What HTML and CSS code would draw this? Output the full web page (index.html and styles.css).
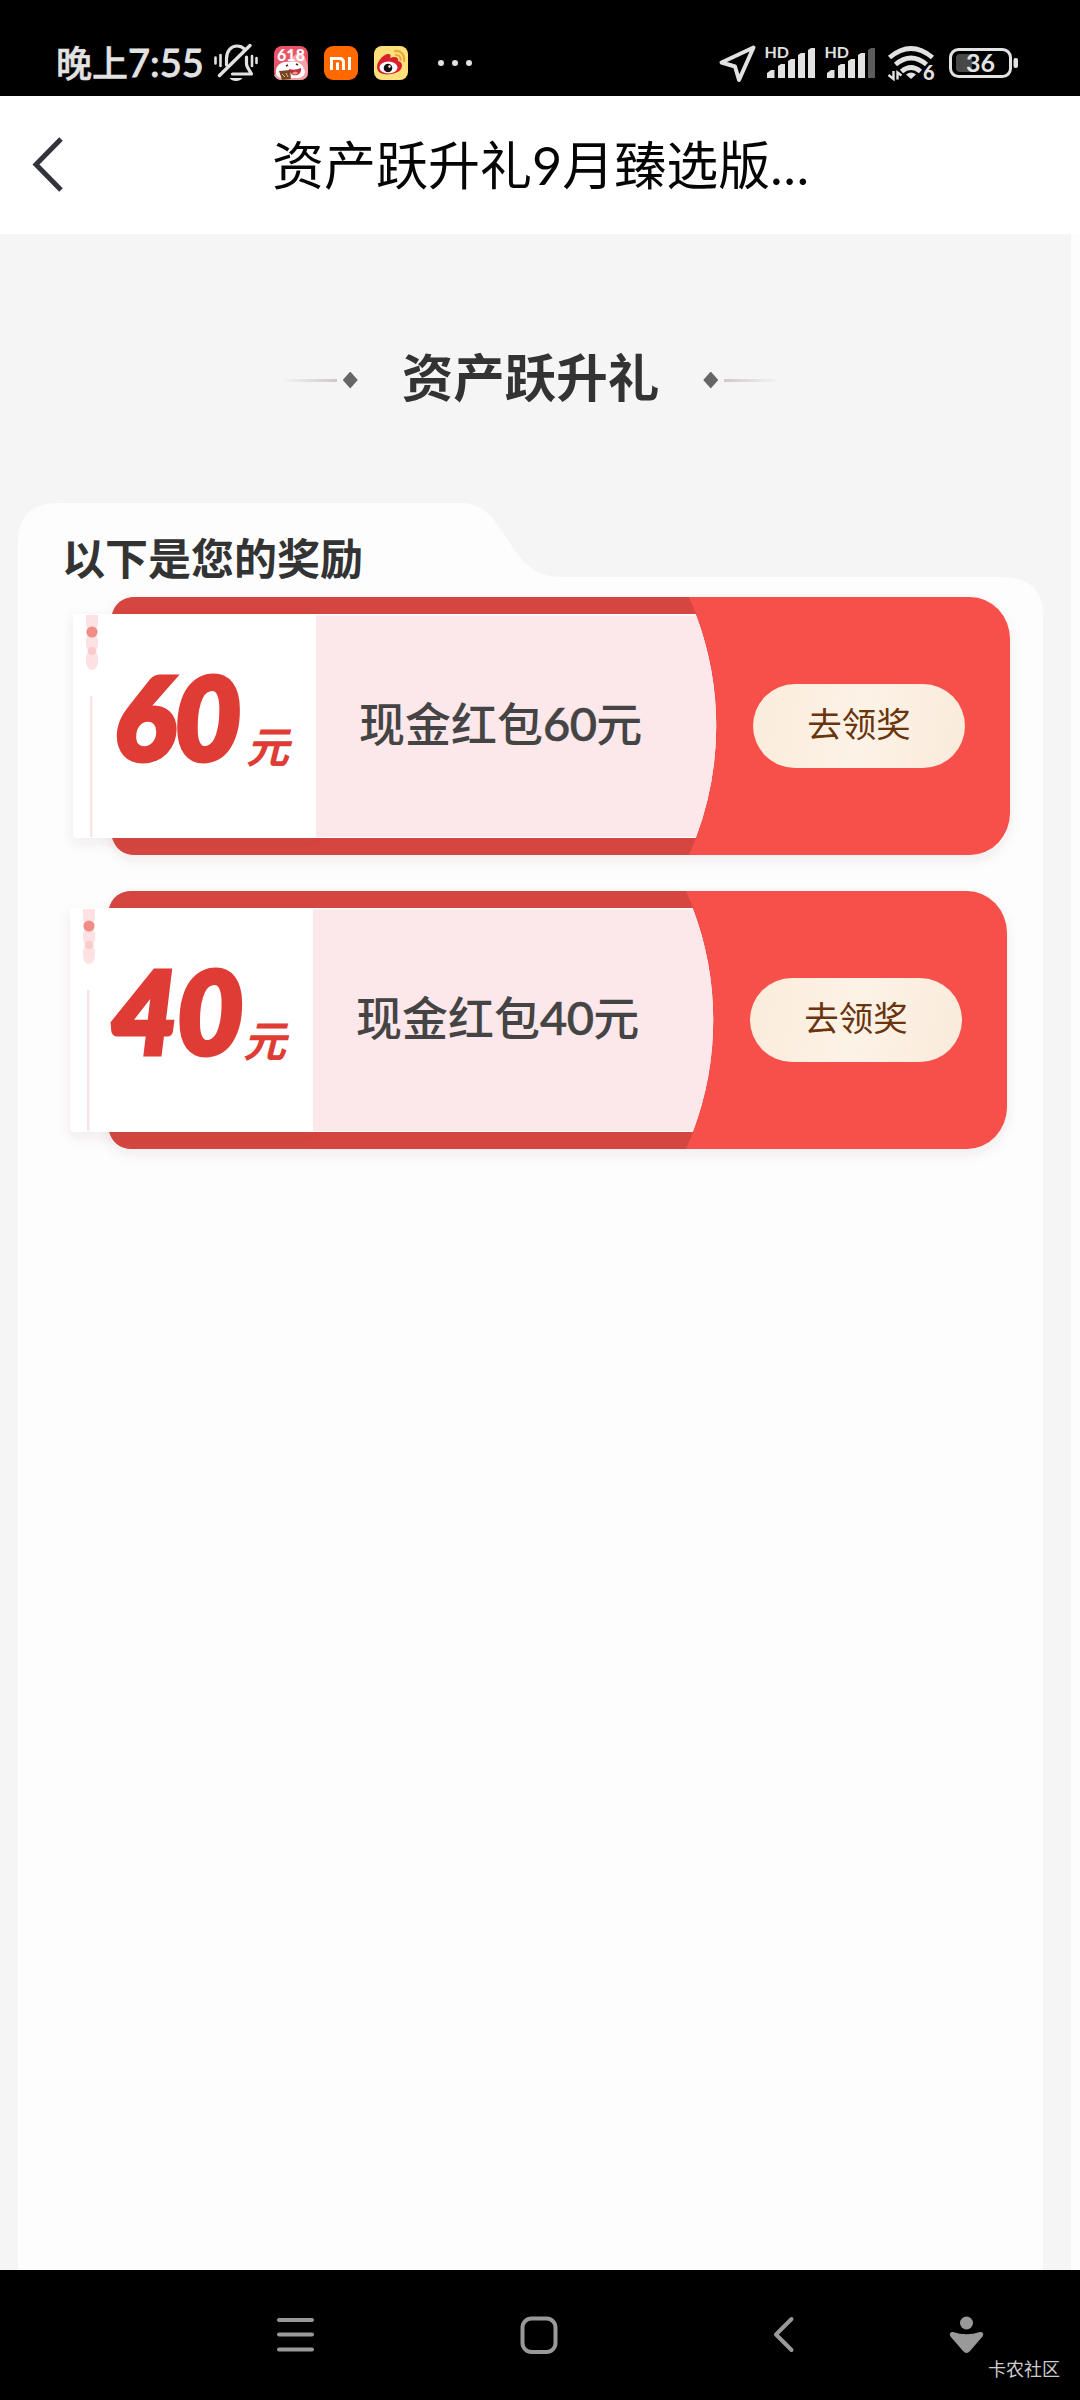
FILE: index.html
```html
<!DOCTYPE html>
<html lang="zh-CN">
<head>
<meta charset="utf-8">
<title>资产跃升礼</title>
<link rel="stylesheet" href="styles.css">
</head>
<body>
<div class="status">
  <span class="clock">晚上<span class="digits">7:55</span></span>
  <svg class="bell" width="46" height="40" viewBox="213 44 46 40" fill="none" stroke="#e2e2e2" stroke-width="3.2" stroke-linecap="round" stroke-linejoin="round">
    <path d="M215.500 58.500v6M220.500 56v11M252 57v10M256.500 59v5" stroke-width="2.600"/>
    <path d="M226.500 66v-6c0-8 4.500-13 10.500-13 3 0 5.500 1 7.500 3M246.500 58v7c0 3 3 6 5 10h-19"/>
    <path d="M250 46.500L219.500 76.500" stroke-width="3.400"/><path d="M229.500 79h13c-2.500 4-10.500 4-13 0z" fill="#e2e2e2" stroke="none"/>
  </svg>
  <div class="apps">
    <svg width="34" height="34" viewBox="0 0 34 34">
      <rect width="34" height="34" rx="8" fill="#e9546a"/>
      <path d="M24 6c6 2 10 9 10 18v2q0 8-8 8H8q-6 0-8-5l6-5z" fill="#f3a2a8"/>
      <text x="17" y="15" text-anchor="middle" class="t618">618</text>
      <path d="M2 24c1-6 7-9 13-8 7-2 14 2 15 7 3 4-1 9-7 9H9c-5 0-8-3-7-8z" fill="#fff"/>
      <path d="M15 23q6 2 12-1c1 9-11 10-12 1z" fill="#c32c39"/><path d="M18 27q4-3 6 0-3 3-6 0z" fill="#f59a9a"/>
      <path d="M12 20l2-1M22 18l2 1" stroke="#4b2020" stroke-width="1.600"/>
      <path d="M5 25l11-1 1 9-9 1z" fill="#774624"/><path d="M8 28l3 3M12 27l2 4" stroke="#e6bd7a"/>
    </svg>
    <svg width="34" height="34" viewBox="0 0 34 34">
      <rect width="34" height="34" rx="9" fill="#ff6900"/>
      <path d="M7.500 24V12.500h8q4 0 4 4V24M13.500 16.500V24M25.500 11v13" fill="none" stroke="#fff" stroke-width="3"/>
    </svg>
    <svg width="34" height="34" viewBox="0 0 34 34">
      <rect width="34" height="34" rx="8" fill="#ffe07a"/>
      <path d="M3 21c0-6 7-13 11-13 3 0 3 2 2 4 4-2 9-1 8 3 4 1 5 4 3 8-3 6-24 9-24-2z" fill="#d9202c"/>
      <ellipse cx="14.500" cy="21.500" rx="9" ry="6" fill="#fff"/><circle cx="14" cy="22" r="4.300" fill="#111"/><circle cx="15.500" cy="20.500" r="1.200" fill="#fff"/>
      <path d="M21 5c6-1 10 4 9 10M22 9c3 0 5 2 4.500 5" fill="none" stroke="#e7a93c" stroke-width="2.200" stroke-linecap="round"/>
    </svg>
  </div>
  <svg class="more" width="36" height="8" viewBox="0 0 36 8" fill="#e2e2e2"><circle cx="4" cy="4" r="3"/><circle cx="18" cy="4" r="3"/><circle cx="32" cy="4" r="3"/></svg>
  <div class="signals">
    <svg width="40" height="40" viewBox="716 44 40 40" fill="none" stroke="#e2e2e2" stroke-width="4" stroke-linejoin="round"><path d="M752.500 48.500L720.500 63.500 734 67.500 738 81z"/></svg>
    <svg width="55" height="48" viewBox="762 40 55 48" fill="#e2e2e2">
      <text x="764.500" y="59" class="hd">HD</text>
      <path d="M767 74l4-3h3.500v8H767zM778 67l3-2h4v14h-7zM788 62l3-2h4v19h-7zM798 56l3-2h4v25h-7zM808 51l3-2h4v30h-7z"/>
    </svg>
    <svg class="sim2" width="55" height="48" viewBox="762 40 55 48" fill="#e2e2e2">
      <text x="764.500" y="59" class="hd">HD</text>
      <path d="M767 74l4-3h3.500v8H767zM778 67l3-2h4v14h-7zM788 62l3-2h4v19h-7zM798 56l3-2h4v25h-7z"/>
      <path d="M808 51l3-2h4v30h-7z" fill="#5c5c5c"/>
    </svg>
    <svg class="wifi" width="48" height="40" viewBox="887 44 48 40" fill="none" stroke="#e2e2e2" stroke-width="4.800">
      <path d="M889.500 58.500q21.500-18 43 0M895.500 65.500q15.500-13 31 0M901.500 72.500q9.500-8 19 0"/>
      <path d="M906 75.500q5-4 10 0l-5 4.500z" fill="#e2e2e2" stroke="none"/>
      <path d="M893.500 72v8l-5-4M897.500 80.500v-7l4 3" stroke-width="2.400"/>
      <text x="923" y="80.500" class="w6">6</text>
    </svg>
    <svg class="batt" width="72" height="34" viewBox="948 46 72 34">
      <rect x="950.500" y="49.500" width="60" height="27" rx="8" fill="none" stroke="#e2e2e2" stroke-width="3"/>
      <path d="M960 54h12v18h-12q-4 0-4-4V58q0-4 4-4z" fill="#484848"/>
      <rect x="1013.500" y="58" width="4.500" height="10" rx="2" fill="#e2e2e2"/>
      <text x="980.500" y="72" text-anchor="middle" class="pct">36</text>
    </svg>
  </div>
</div>
<header class="header">
  <svg class="back" width="32" height="56" viewBox="0 0 32 56" fill="none" stroke="#33333c" stroke-width="5"><path d="M29 2L4 27.500 29 53"/></svg>
  <h1 class="page-title">资产跃升礼9月臻选版<span class="dots">...</span></h1>
</header>
<main class="page">
  <div class="banner">
    <span class="rule left"></span><span class="gem"></span>
    <h2 class="banner-title">资产跃升礼</h2>
    <span class="gem"></span><span class="rule"></span>
  </div>
  <section class="card">
    <svg class="card-shape" width="1025" height="1767" viewBox="18 503 1025 1767"><path d="M18 2270V543Q18 503 58 503H461C509 503 505 577 560 577H1003Q1043 577 1043 617V2270z" fill="#fdfdfd"/></svg>
    <h3 class="card-title">以下是您的奖励</h3>
    <div class="coupons">
      <article class="coupon">
        <svg class="coupon-shape" width="940" height="258" viewBox="72 597 940 258">
          <use href="#ticket"/>
        </svg>
        <div class="amount"><b class="num">60</b><span class="unit">元</span></div>
        <div class="name">现金红包<span class="digits">60</span>元</div>
        <button class="claim">去领奖</button>
      </article>
      <article class="coupon second">
        <svg class="coupon-shape" width="940" height="258" viewBox="72 597 940 258">
          <use href="#ticket"/>
        </svg>
        <div class="amount"><b class="num">40</b><span class="unit">元</span></div>
        <div class="name">现金红包<span class="digits">40</span>元</div>
        <button class="claim">去领奖</button>
      </article>
    </div>
  </section>
</main>
<nav class="nav">
  <svg class="menu" width="38" height="34" viewBox="276 2319 38 34" stroke="#999" stroke-width="4" stroke-linecap="round"><path d="M279 2321h33M279 2335.500h33M279 2350.500h33"/></svg>
  <svg class="home" width="38" height="38" viewBox="0 0 38 38" fill="none" stroke="#999" stroke-width="4"><rect x="2.500" y="2.500" width="33" height="33.500" rx="9"/></svg>
  <svg class="prev" width="22" height="38" viewBox="773 2317 22 38" fill="none" stroke="#999" stroke-width="4" stroke-linecap="round" stroke-linejoin="round"><path d="M791.500 2320L776 2335.500 791.500 2351"/></svg>
  <svg class="person" width="36" height="38" viewBox="949 2316 36 38" fill="#999"><circle cx="966.500" cy="2323" r="6.500"/><path d="M953 2332q13.500 4.500 27 0c3-.5 4 2 2.500 4.500L970 2351q-3.500 4-7 0l-12.500-14.500c-1.500-2.500-.5-5 2.500-4.500z"/></svg>
  <span class="mark">卡农社区</span>
</nav>
<svg class="defs" width="0" height="0">
  <defs>
    <filter id="soft" x="-10%" y="-10%" width="120%" height="125%"><feDropShadow dx="0" dy="5" stdDeviation="6" flood-color="#604040" flood-opacity=".09"/></filter>
    <g id="ticket">
      <path filter="url(#soft)" d="M136 597H970A40 42 0 0 1 1010 639V813A40 42 0 0 1 970 855H136Q112 855 110 826V626Q112 597 136 597z" fill="#f75049"/>
      <path d="M136 597H689A316 316 0 0 1 689 855H136Q117 855 112 837V614Q117 597 136 597z" fill="#d64640"/>
      <path filter="url(#soft)" d="M73 614H317V838H77Q73 838 73 834z" fill="#fff"/>
      <path d="M300 614H695.700A316 316 0 0 1 695.700 838H300z" fill="#fff"/>
      <path d="M316 615.500H696.200A316 316 0 0 1 696.200 837H316z" fill="#fce8ea"/>
      <path d="M86 615h12v9q-3 8 0 16v6q-3 5 0 10v6q-1 8-6 8t-6-8v-6q3-5 0-10v-6q3-8 0-16z" fill="#fde1e3"/>
      <circle cx="92" cy="632" r="5.600" fill="#f08d84"/><circle cx="92" cy="651" r="4" fill="#fbcaca"/>
      <path d="M90 696h2.500v141H90z" fill="#fae3e4"/>
    </g>
  </defs>
</svg>
</body>
</html>
```
FILE: styles.css
```css
* { box-sizing: border-box; }
body {
  margin: 0;
  width: 1080px;
  height: 2400px;
  display: flex;
  flex-direction: column;
  background: #fdfdfd;
  font-family: Lato, "Noto Sans CJK SC", sans-serif;
  overflow: hidden;
}
h1, h2, h3 { margin: 0; }
svg { display: block; flex: none; }
.defs { position: absolute; }

.status {
  height: 96px;
  background: #000;
  color: #e2e2e2;
  display: flex;
  align-items: center;
  padding: 30px 62px 0 56px;
}
.clock { width: 157px; margin-top: -2px; font-size: 36px; line-height: 40px; font-weight: 500; white-space: nowrap; -webkit-text-stroke: .5px #e2e2e2; }
.clock .digits { font-size: 38px; -webkit-text-stroke-width: .8px; }
.bell { margin-top: 0; }
.apps { display: flex; gap: 16px; margin-left: 15px; }
.more { margin-left: 29px; }
.signals { display: flex; align-items: center; margin-left: auto; }
.signals svg { margin-right: 5px; }
.signals .sim2 { margin-right: 10px; }
.signals .wifi { margin-right: 13px; }
.signals .batt { margin-right: -2px; }
.t618 { font: 900 16px Lato, sans-serif; fill: #fff; }
.hd { font: 700 16px Lato, sans-serif; }
.w6 { font: 900 20px Lato, sans-serif; fill: #e2e2e2; stroke: none; }
.pct { font: 700 25px Lato, sans-serif; fill: #e2e2e2; }

.header {
  height: 138px;
  background: #fff;
  display: flex;
  align-items: center;
  padding-left: 32px;
}
.page-title { margin: -1px 0 0 208px; font-size: 52px; font-weight: 400; line-height: 70px; color: #050505; white-space: nowrap; }
.dots { letter-spacing: 1px; }

.page {
  width: 1071px;
  height: 2036px;
  background: #f5f5f5;
  padding: 109px 28px 0 18px;
}
.banner { height: 74px; display: flex; align-items: center; justify-content: center; }
.banner-title { margin: -6px 44px 0; font-size: 51.500px; line-height: 74px; font-weight: 700; color: #333; }
.gem { width: 15px; height: 17px; background: #666; clip-path: polygon(50% 0, 100% 50%, 50% 100%, 0 50%); }
.rule { width: 55px; height: 3px; margin-left: 6px; background: linear-gradient(90deg, #cfc8ca, #f5f5f5); }
.rule.left { margin: 0 6px 0 0; background: linear-gradient(90deg, #f5f5f5, #cfc8ca); }

.card { position: relative; height: 1767px; margin-top: 86px; padding: 26px 31px 0 44px; }
.card-shape { position: absolute; left: 0; top: 0; }
.card-title { position: relative; font-size: 43px; line-height: 60px; font-weight: 700; color: #333; }
.coupons { position: relative; display: flex; flex-direction: column; gap: 36px; margin: 8px 0 0 10px; }
.coupon { position: relative; height: 258px; width: 940px; display: flex; align-items: center; }
.coupon.second { left: -3px; }
.coupon-shape { position: absolute; left: 0; top: 0; overflow: visible; }
.amount { position: relative; width: 288px; height: 140px; margin-top: -18px; padding-left: 42px; display: flex; align-items: flex-start; color: #e03c36; font-style: italic; white-space: nowrap; }
.num { width: 133px; font-size: 114px; font-weight: 900; line-height: 138px; letter-spacing: 0; -webkit-text-stroke: 5px #e03c36; }
.unit { margin: 70px 0 0 -1px; font-size: 43px; font-weight: 700; line-height: 60px; }
.name { position: relative; width: 393px; margin: -6px 0 0 -1px; font-size: 46px; font-weight: 500; line-height: 60px; color: #444; white-space: nowrap; }
.name .digits { font-size: 47px; letter-spacing: -.6px; -webkit-text-stroke: .6px #444; }
.claim {
  position: relative;
  width: 212px;
  height: 84px;
  margin: -1px 0 0 1px;
  padding: 0 0 4px;
  border: 0;
  border-radius: 42px;
  background: linear-gradient(100deg, #fbecdb, #fcf2e6 50%, #faebdb);
  color: #6a340c;
  font: 400 34.500px/80px Lato, "Noto Sans CJK SC", sans-serif;
}

.nav {
  height: 130px;
  background: #000;
  display: flex;
  align-items: center;
  padding-left: 276px;
}
.home { margin-left: 206px; }
.prev { margin-left: 215px; }
.person { margin-left: 154px; }
.mark { margin: 68px 0 0 3px; font-size: 18px; line-height: 24px; color: #ccc; white-space: nowrap; }
```
